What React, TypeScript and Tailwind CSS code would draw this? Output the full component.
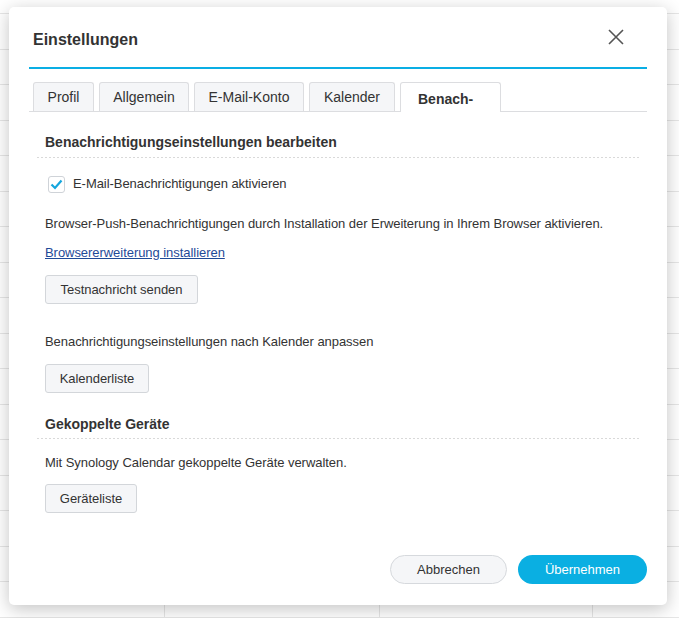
import React from "react";

const rows = Array.from({ length: 18 });
const cols = [165, 215, 213, 86];

function Dotted() {
  return <div className="h-px w-full bg-[linear-gradient(to_right,#d9d9d9_50%,transparent_50%)] bg-[length:4px_1px]" />;
}

function Btn({ children, w }: { children: React.ReactNode; w: string }) {
  return (
    <button className={`h-[29px] ${w} rounded-[3px] border border-[#d3d6da] bg-[#f5f6f8] text-[13px] tracking-[-0.05px] text-[#333]`}>
      {children}
    </button>
  );
}

export default function App() {
  const tabs = [
    { t: "Profil", w: "w-[61px]" },
    { t: "Allgemein", w: "w-[90px]" },
    { t: "E-Mail-Konto", w: "w-[110px]" },
    { t: "Kalender", w: "w-[86px]" },
  ];
  return (
    <div className="relative h-[618px] w-[679px] overflow-hidden bg-white font-['Liberation_Sans',Arial,sans-serif] text-[#333]">
      {/* background calendar grid */}
      <div className="absolute inset-0 flex flex-col pt-[13px]">
        {rows.map((_, i) => (
          <div key={i} className="flex h-[35.5px] shrink-0 border-t border-[#e6e6e6]">
            {cols.map((c, j) => (
              <div key={j} className={j < 3 ? "border-r border-[#e6e6e6]" : ""} style={{ width: c }} />
            ))}
          </div>
        ))}
      </div>

      {/* dialog */}
      <div className="absolute left-[9px] top-[7px] flex h-[598px] w-[658px] flex-col rounded-[5px] bg-white shadow-[0_4px_18px_rgba(0,0,0,0.24)]">
        <div className="flex h-[60px] items-center justify-between pl-[24px] pr-[43px] pt-[6px]">
          <div className="text-[16px] font-bold text-[#333]">Einstellungen</div>
          <svg width="16" height="16" viewBox="0 0 16 16" className="-mt-[6px]">
            <path d="M1 1 L15 15 M15 1 L1 15" stroke="#555" strokeWidth="1.6" />
          </svg>
        </div>
        <div className="mx-[20px] h-[2px] bg-[#0aaee4]" />

        <div className="mx-[20px] mt-[13px] flex gap-[5px] border-b border-[#dcdde0] pl-[4px]">
          {tabs.map((t) => (
            <div
              key={t.t}
              className={`flex h-[29px] ${t.w} items-center justify-center rounded-t-[3px] border border-b-0 border-[#dcdde0] bg-[#f5f6f8] text-[14px] text-[#333]`}
            >
              {t.t}
            </div>
          ))}
          <div className="-mb-px flex h-[30px] w-[101px] items-start justify-start rounded-t-[3px] border border-b-0 border-[#dcdde0] bg-white pl-[17px] pt-[6px] text-[14px] font-bold text-[#333]">
            Benach-
          </div>
        </div>

        <div className="flex flex-1 flex-col px-[28px] text-[13px] tracking-[-0.05px]">
          <div className="mt-[20px] pl-[8px] text-[14px] font-bold leading-[20px] tracking-normal text-[#333]">
            Benachrichtigungseinstellungen bearbeiten
          </div>
          <div className="mt-[5px]">
            <Dotted />
          </div>

          <div className="ml-[11px] mt-[16px] flex h-[20px] items-center gap-[8px]">
            <div className="flex h-[17px] w-[17px] items-center justify-center rounded-[3px] border border-[#cfd3d8] bg-white">
              <svg width="13" height="11" viewBox="0 0 13 11">
                <path d="M1.5 5.5 L5 9 L11.5 1.5" stroke="#14a6dd" strokeWidth="2.2" fill="none" />
              </svg>
            </div>
            <span className="text-[#333]">E-Mail-Benachrichtigungen aktivieren</span>
          </div>

          <div className="mt-[20px] pl-[8px] leading-[20px]">
            Browser-Push-Benachrichtigungen durch Installation der Erweiterung in Ihrem Browser aktivieren.
          </div>
          <div className="mt-[9px] pl-[8px] leading-[20px]">
            <a className="text-[#1f4a98] underline">Browsererweiterung installieren</a>
          </div>
          <div className="mt-[12px] pl-[8px]">
            <Btn w="w-[153px]">Testnachricht senden</Btn>
          </div>

          <div className="mt-[28px] pl-[8px] leading-[20px]">
            Benachrichtigungseinstellungen nach Kalender anpassen
          </div>
          <div className="mt-[12px] pl-[8px]">
            <Btn w="w-[104px]">Kalenderliste</Btn>
          </div>

          <div className="mt-[21px] pl-[8px] text-[14px] font-bold leading-[20px] tracking-normal text-[#333]">Gekoppelte Geräte</div>
          <div className="mt-[4px]">
            <Dotted />
          </div>
          <div className="mt-[14px] pl-[8px] leading-[20px]">
            Mit Synology Calendar gekoppelte Geräte verwalten.
          </div>
          <div className="mt-[11px] pl-[8px]">
            <Btn w="w-[92px]">Geräteliste</Btn>
          </div>
        </div>

        <div className="flex justify-end gap-[11px] pb-[21px] pr-[20px]">
          <button className="h-[29px] w-[117px] rounded-full border border-[#d6d9dd] bg-[#f5f6f8] text-[13px] text-[#333]">
            Abbrechen
          </button>
          <button className="h-[29px] w-[129px] rounded-full bg-[#0aafe2] text-[13px] text-white">Übernehmen</button>
        </div>
      </div>
    </div>
  );
}
